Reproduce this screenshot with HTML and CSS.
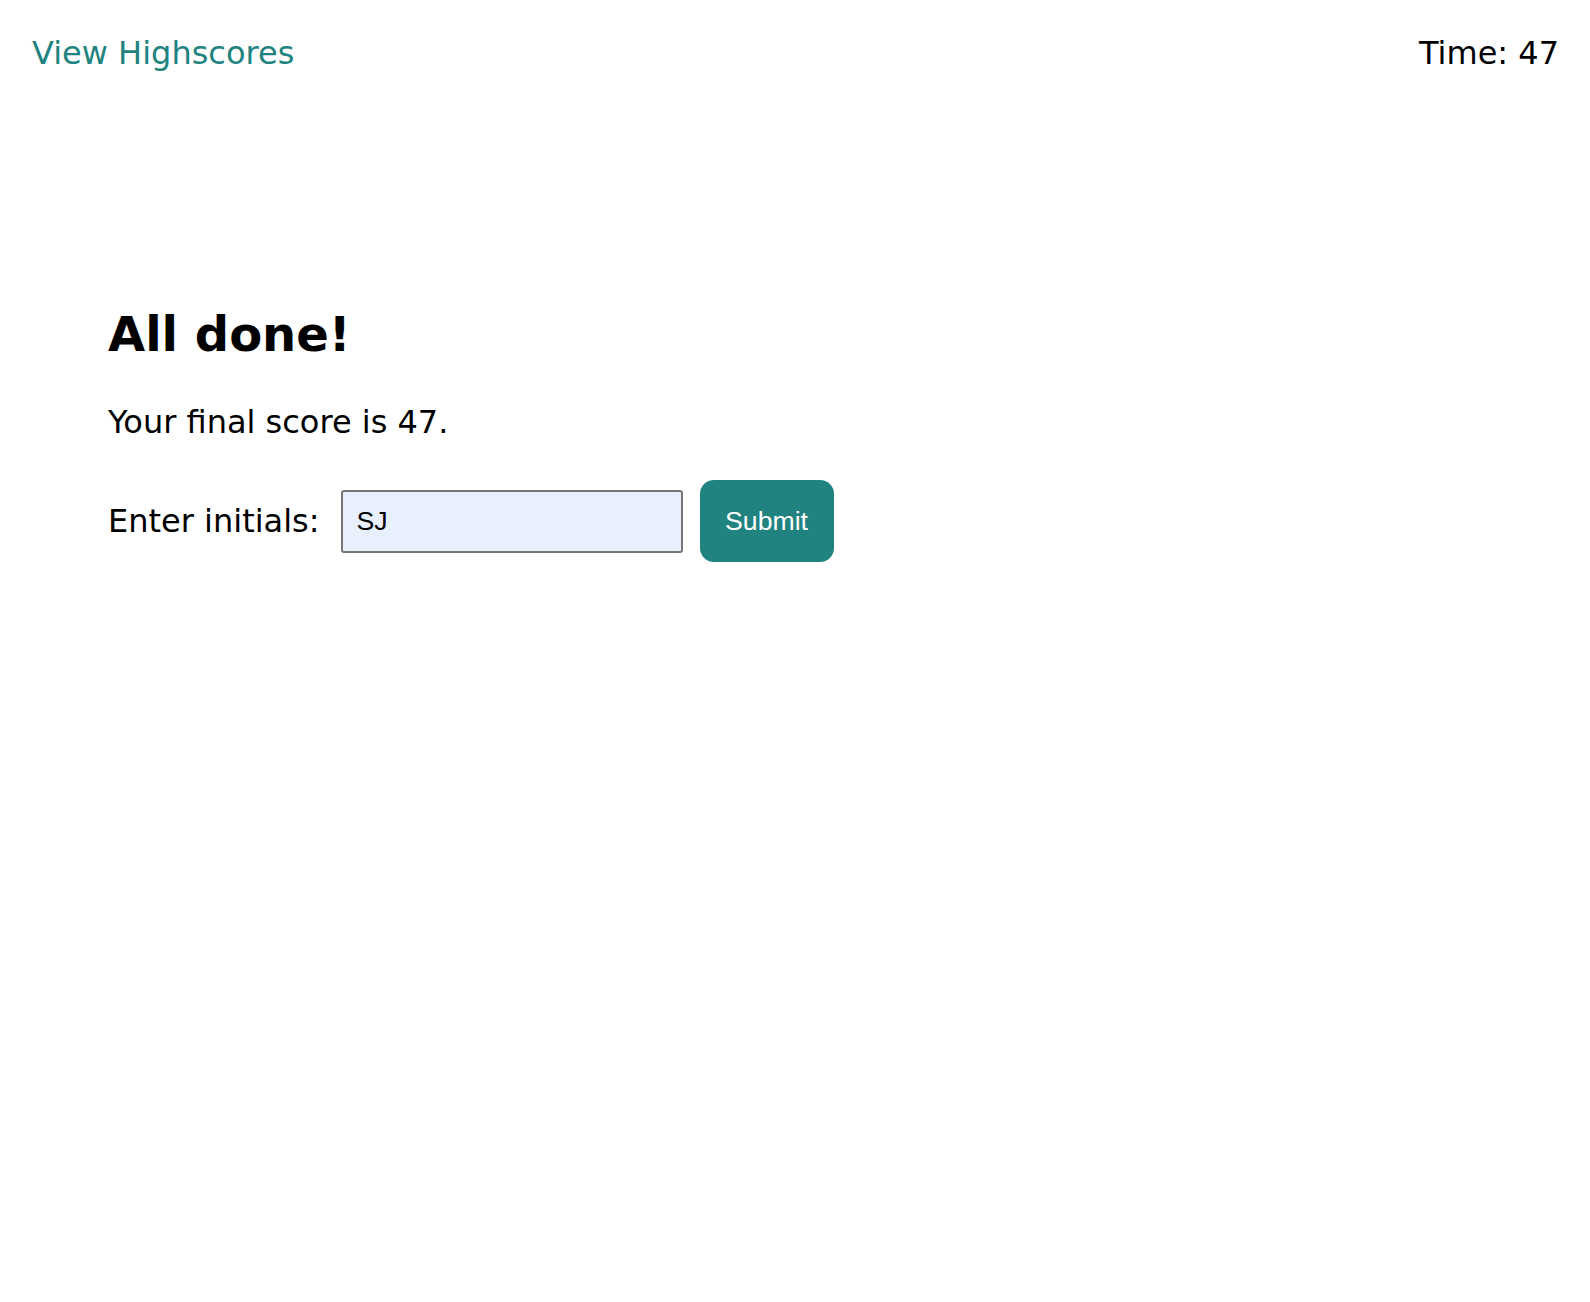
FILE: index.html
```html
<!DOCTYPE html>
<html lang="en">
<head>
<meta charset="utf-8">
<title>Quiz</title>
<link rel="stylesheet" href="styles.css">
</head>
<body>
<header class="top-bar">
  <a class="highscores-link" href="#">View Highscores</a>
  <div class="timer">Time: 47</div>
</header>
<main class="content">
  <h1 class="title">All done!</h1>
  <p class="score">Your final score is 47.</p>
  <form class="initials-form">
    <label class="initials-label" for="initials">Enter initials:</label>
    <input class="initials-input" id="initials" type="text" value="SJ">
    <button class="submit-btn" type="button">Submit</button>
  </form>
</main>
</body>
</html>
```
FILE: styles.css
```css
html, body {
  margin: 0;
  padding: 0;
  background: #ffffff;
}

body {
  font-family: "DejaVu Sans", Verdana, sans-serif;
  font-size: 32px;
  color: #000000;
}

.top-bar {
  display: flex;
  justify-content: space-between;
  align-items: baseline;
  padding: 34px 31px 0 32px;
  line-height: normal;
}

.highscores-link {
  color: #218380;
  text-decoration: none;
}

.timer {
  color: #000000;
}

.content {
  padding: 234px 0 0 108px;
}

.title {
  margin: 0;
  font-size: 48px;
  font-weight: bold;
  line-height: normal;
}

.score {
  margin: 41px 0 0 0;
  line-height: normal;
}

.initials-form {
  display: flex;
  align-items: center;
  margin-top: 39px;
}

.initials-label {
  margin-right: 21px;
}

.initials-input {
  box-sizing: border-box;
  width: 342px;
  height: 63px;
  border: 2px solid #767676;
  border-radius: 3px;
  background: #e8f0fe;
  padding: 0 14px;
  font-family: "Liberation Sans", Arial, sans-serif;
  font-size: 26.67px;
  color: #000000;
  margin-right: 17px;
}

.submit-btn {
  box-sizing: border-box;
  width: 134px;
  height: 82px;
  border: none;
  border-radius: 14px;
  background: #218380;
  color: #ffffff;
  font-family: "Liberation Sans", Arial, sans-serif;
  font-size: 26.67px;
  padding: 0;
  cursor: pointer;
}
```
